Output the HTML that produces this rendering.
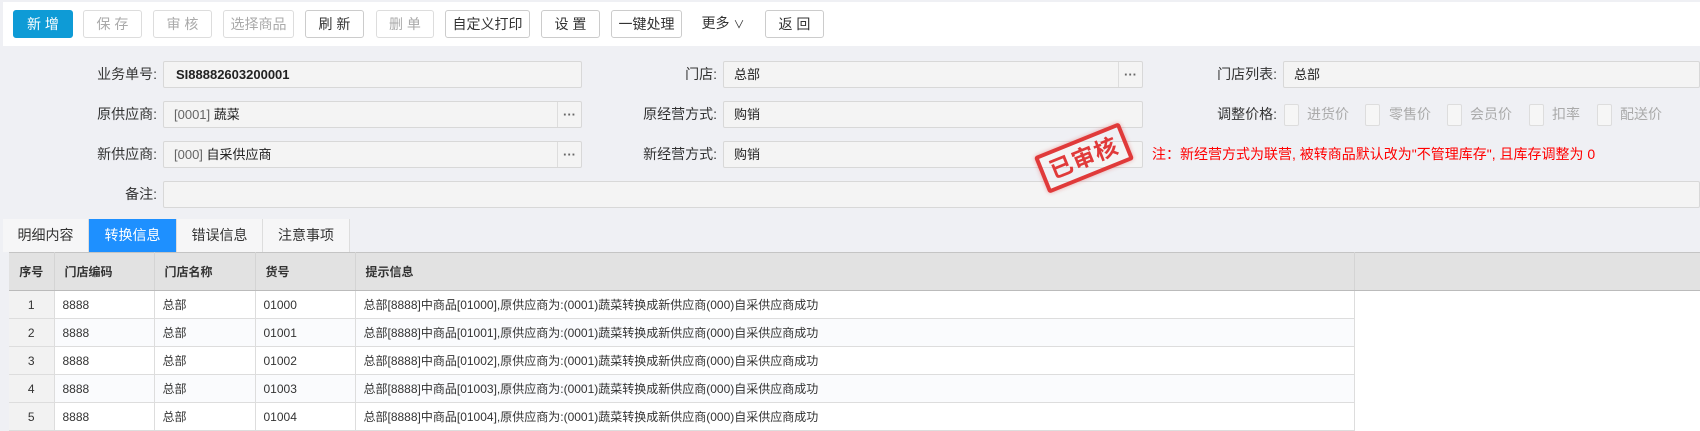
<!DOCTYPE html>
<html><head><meta charset="utf-8"><style>
*{box-sizing:border-box;margin:0;padding:0}
body{width:1700px;height:429px;overflow:hidden;background:#eff0f4;font-family:"Liberation Sans","Noto Sans CJK SC",sans-serif;font-size:13px;color:#333;position:relative}
.abs{position:absolute}
.tb{left:3px;top:2px;width:1697px;height:44px;background:#fff}
.btn{position:absolute;top:10px;height:28px;border:1px solid #ccc;border-radius:3px;background:#fff;font-size:14px;text-align:center;line-height:26px;color:#333}
.btn.dis{color:#aaa;border-color:#ddd}
.btn.pri{background:#0e9bd6;border-color:#0e9bd6;color:#fff}
.lbl{position:absolute;text-align:right;font-size:14px;color:#333;line-height:27px;height:27px}
.inp{position:absolute;height:27px;border:1px solid #d8d8d8;background:#f4f4f4;border-radius:2px;line-height:25px;padding-left:10px;font-size:13px;color:#222}
.dots{position:absolute;right:0;top:0;width:24px;height:25px;border-left:1px solid #ddd;text-align:center;color:#666;font-size:13px;line-height:25px;font-weight:bold}
.cb{position:absolute;top:104px;width:15px;height:22px;border:1px solid #ddd;border-radius:2px;background:#f6f6f6}
.cbl{position:absolute;top:101px;line-height:27px;color:#aaa;font-size:14px}
.tab{position:absolute;top:219px;height:33px;line-height:33px;text-align:center;font-size:14px;background:#f6f6f7;border-right:1px solid #ddd;color:#333}
table{position:absolute;left:9px;top:252px;border-collapse:collapse;font-size:12px;table-layout:fixed;width:1691px}
th{background:#e2e2e2;height:38px;text-align:left;padding-left:10px;font-weight:bold;border-right:1px solid #d4d4d4;border-top:1px solid #c4c4c4;border-bottom:1px solid #bbb}
td{height:28px;padding-left:8px;border-right:1px solid #ddd;border-bottom:1px solid #ddd;background:#fff;white-space:nowrap;overflow:hidden}
tr:nth-child(odd) td{background:#fafbfd}
td.n{background:#f2f2f2 !important;text-align:center;padding:0}
</style></head><body>
<div class="abs tb"></div>
<div class="btn pri" style="left:13px;width:60px">新 增</div>
<div class="btn dis" style="left:83px;width:59px">保 存</div>
<div class="btn dis" style="left:153px;width:59px">审 核</div>
<div class="btn dis" style="left:223px;width:71px">选择商品</div>
<div class="btn" style="left:305px;width:59px">刷 新</div>
<div class="btn dis" style="left:376px;width:58px">删 单</div>
<div class="btn" style="left:445px;width:85px">自定义打印</div>
<div class="btn" style="left:541px;width:59px">设 置</div>
<div class="btn" style="left:611px;width:71px">一键处理</div>
<div class="btn" style="left:692px;width:62px;border:none">更多 <span style="font-size:11px">∨</span></div>
<div class="btn" style="left:765px;width:59px">返 回</div>

<div class="lbl" style="left:40px;width:117px;top:61px">业务单号:</div>
<div class="inp" style="left:163px;width:419px;top:61px;font-weight:bold;padding-left:12px">SI88882603200001</div>
<div class="lbl" style="left:40px;width:117px;top:101px">原供应商:</div>
<div class="inp" style="left:163px;width:419px;top:101px"><span style="color:#666">[0001]</span> 蔬菜<div class="dots">···</div></div>
<div class="lbl" style="left:40px;width:117px;top:141px">新供应商:</div>
<div class="inp" style="left:163px;width:419px;top:141px"><span style="color:#666">[000]</span> 自采供应商<div class="dots">···</div></div>
<div class="lbl" style="left:40px;width:117px;top:181px">备注:</div>
<div class="inp" style="left:163px;width:1537px;top:181px"></div>

<div class="lbl" style="left:600px;width:117px;top:61px">门店:</div>
<div class="inp" style="left:723px;width:420px;top:61px">总部<div class="dots">···</div></div>
<div class="lbl" style="left:600px;width:117px;top:101px">原经营方式:</div>
<div class="inp" style="left:723px;width:420px;top:101px">购销</div>
<div class="lbl" style="left:600px;width:117px;top:141px">新经营方式:</div>
<div class="inp" style="left:723px;width:420px;top:141px">购销</div>

<div class="lbl" style="left:1160px;width:117px;top:61px">门店列表:</div>
<div class="inp" style="left:1283px;width:417px;top:61px">总部</div>
<div class="lbl" style="left:1160px;width:117px;top:101px">调整价格:</div>
<div class="cb" style="left:1284px"></div><div class="cbl" style="left:1307px">进货价</div>
<div class="cb" style="left:1365px"></div><div class="cbl" style="left:1389px">零售价</div>
<div class="cb" style="left:1447px"></div><div class="cbl" style="left:1470px">会员价</div>
<div class="cb" style="left:1529px"></div><div class="cbl" style="left:1552px">扣率</div>
<div class="cb" style="left:1597px"></div><div class="cbl" style="left:1620px">配送价</div>
<div class="abs" style="left:1152px;top:141px;line-height:27px;color:#f00;font-size:14px">注：新经营方式为联营, 被转商品默认改为"不管理库存", 且库存调整为 0</div>

<div class="abs" style="left:1038px;top:138px;width:92px;height:40px;border:4px solid #e03a3a;border-radius:3px;transform:rotate(-22deg);color:#e03a3a;font-weight:bold;font-size:23px;line-height:32px;text-align:center;letter-spacing:1px;box-shadow:0 0 4px rgba(224,58,58,.4)">已审核</div>

<div class="tab" style="left:3px;width:86px">明细内容</div>
<div class="tab" style="left:89px;width:88px;background:#1e90ff;color:#fff">转换信息</div>
<div class="tab" style="left:177px;width:86px">错误信息</div>
<div class="tab" style="left:263px;width:87px">注意事项</div>

<table>
<colgroup><col style="width:45px"><col style="width:100px"><col style="width:101px"><col style="width:100px"><col style="width:999px"><col style="width:346px"></colgroup>
<tr><th style="padding:0;text-align:center">序号</th><th>门店编码</th><th>门店名称</th><th>货号</th><th>提示信息</th><th style="border-right:none"></th></tr>
<tr><td class="n">1</td><td>8888</td><td>总部</td><td>01000</td><td>总部[8888]中商品[01000],原供应商为:(0001)蔬菜转换成新供应商(000)自采供应商成功</td><td style="border:none;background:#fff"></td></tr>
<tr><td class="n">2</td><td>8888</td><td>总部</td><td>01001</td><td>总部[8888]中商品[01001],原供应商为:(0001)蔬菜转换成新供应商(000)自采供应商成功</td><td style="border:none;background:#fff"></td></tr>
<tr><td class="n">3</td><td>8888</td><td>总部</td><td>01002</td><td>总部[8888]中商品[01002],原供应商为:(0001)蔬菜转换成新供应商(000)自采供应商成功</td><td style="border:none;background:#fff"></td></tr>
<tr><td class="n">4</td><td>8888</td><td>总部</td><td>01003</td><td>总部[8888]中商品[01003],原供应商为:(0001)蔬菜转换成新供应商(000)自采供应商成功</td><td style="border:none;background:#fff"></td></tr>
<tr><td class="n">5</td><td>8888</td><td>总部</td><td>01004</td><td>总部[8888]中商品[01004],原供应商为:(0001)蔬菜转换成新供应商(000)自采供应商成功</td><td style="border:none;background:#fff"></td></tr>
</table>
</body></html>
